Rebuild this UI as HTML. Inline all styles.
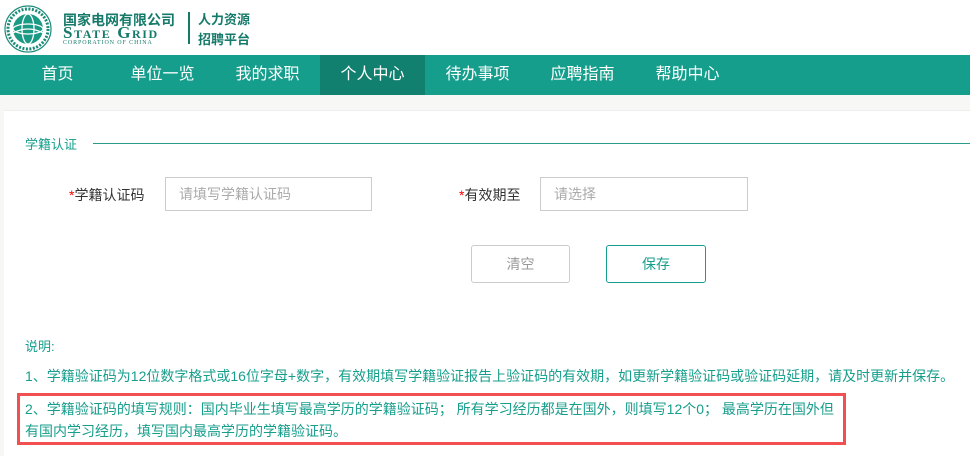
<!DOCTYPE html>
<html><head><meta charset="utf-8"><style>
*{margin:0;padding:0;box-sizing:border-box}
body{width:970px;height:456px;overflow:hidden;background:#f7f7f5;font-family:"Liberation Sans","Noto Sans CJK SC",sans-serif;position:relative}
.hdr{position:absolute;left:0;top:0;width:970px;height:55px;background:#fff}
.t1{position:absolute;left:63px;top:10px;font-size:14px;font-weight:bold;color:#167a6a;letter-spacing:0px}
.t2{position:absolute;left:63px;top:24px;font-family:"Liberation Serif",serif;font-weight:bold;font-size:17px;font-variant:small-caps;color:#167a6a;letter-spacing:1.6px;line-height:18px}
.t3{position:absolute;left:63px;top:40px;font-family:"Liberation Serif",serif;font-size:6px;color:#167a6a;letter-spacing:.9px}
.vl{position:absolute;left:188px;top:12px;width:2px;height:32px;background:#167a6a}
.t4{position:absolute;left:198px;top:10px;font-size:13px;font-weight:bold;color:#167a6a;line-height:20px}
.nav{position:absolute;left:0;top:55px;width:970px;height:40px;background:#169e8c}
.nav span{position:absolute;top:0;height:40px;line-height:40px;width:105px;text-align:center;color:#fff;font-size:16px}
.panel{position:absolute;left:4px;top:110px;width:966px;height:346px;background:#fff;border-top:1px solid #eee}
.abs{position:absolute;white-space:nowrap}
.inp{position:absolute;height:34px;border:1px solid #ccc;font-size:14px;color:#aaa;line-height:32px;padding-left:13px}
.btn{position:absolute;top:245px;width:99px;height:38px;border-radius:3px;text-align:center;line-height:36px;font-size:14px}
.g{color:#169e8c;font-size:14px}
</style></head><body>
<div class="hdr">
<svg style="position:absolute;left:4px;top:5px" width="48" height="48" viewBox="0 0 48 48">
<circle cx="24" cy="24" r="23" fill="#fff" stroke="#1a8a78" stroke-width="1.2"/>
<circle cx="24" cy="24" r="15" fill="#1a9a85"/>
<ellipse cx="24" cy="24" rx="15" ry="5" fill="none" stroke="#fff" stroke-width="1.3"/>
<ellipse cx="24" cy="24" rx="6" ry="15" fill="none" stroke="#fff" stroke-width="1.3"/>
<path d="M9 28 Q24 20 39 28" fill="none" stroke="#fff" stroke-width="1.2"/>
<circle cx="24" cy="24" r="20" fill="none" stroke="#1a8a78" stroke-width="3" stroke-dasharray="2 1.5"/>
</svg>
<div class="t1">国家电网有限公司</div>
<div class="t2">State Grid</div>
<div class="t3">CORPORATION OF CHINA</div>
<div class="vl"></div>
<div class="t4">人力资源<br>招聘平台</div>
</div>
<div class="nav">
<span style="left:5px">首页</span>
<span style="left:110px">单位一览</span>
<span style="left:215px">我的求职</span>
<span style="left:320px;background:#11806f">个人中心</span>
<span style="left:425px">待办事项</span>
<span style="left:530px">应聘指南</span>
<span style="left:635px">帮助中心</span>
</div>
<div class="panel"></div>
<div class="abs" style="left:25px;top:134px;font-size:13px;color:#169e8c">学籍认证</div>
<div class="abs" style="left:93px;top:143px;width:877px;height:1px;background:#2a9a8a"></div>
<div class="abs" style="left:69px;top:185px;font-size:14px;color:#333"><span style="color:#f00">*</span>学籍认证码</div>
<div class="inp" style="left:165px;top:177px;width:207px">请填写学籍认证码</div>
<div class="abs" style="left:459px;top:185px;font-size:14px;color:#333"><span style="color:#f00">*</span>有效期至</div>
<div class="inp" style="left:540px;top:177px;width:208px">请选择</div>
<div class="btn" style="left:471px;border:1px solid #ccc;color:#999">清空</div>
<div class="btn" style="border:1px solid #169e8c;color:#169e8c;width:100px;left:606px">保存</div>
<div class="abs g" style="left:25px;top:336px;font-size:13px">说明:</div>
<div class="abs g" style="left:25px;top:366px">1、学籍验证码为12位数字格式或16位字母+数字，有效期填写学籍验证报告上验证码的有效期，如更新学籍验证码或验证码延期，请及时更新并保存。</div>
<div class="abs" style="left:17px;top:393px;width:829px;height:52px;border:3px solid #f25050"></div>
<div class="abs g" style="left:25px;top:398px;line-height:22px">2、学籍验证码的填写规则：国内毕业生填写最高学历的学籍验证码； 所有学习经历都是在国外，则填写12个0； 最高学历在国外但<br>有国内学习经历，填写国内最高学历的学籍验证码。</div>
</body></html>
